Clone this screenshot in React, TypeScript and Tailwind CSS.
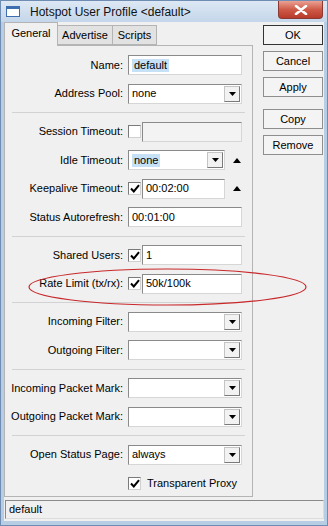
import type { ReactNode } from 'react'

const font = "font-['Liberation_Sans',Arial,sans-serif]"

function Down() {
  return (
    <svg width="7" height="4" viewBox="0 0 7 4">
      <polygon points="0,0 7,0 3.5,4" fill="#000" />
    </svg>
  )
}

function Up() {
  return (
    <div className="w-[23px] flex justify-center">
      <svg width="8" height="5" viewBox="0 0 8 5">
        <polygon points="0,5 8,5 4,0" fill="#000" />
      </svg>
    </div>
  )
}

function Box({ children, className = '' }: { children?: ReactNode; className?: string }) {
  return (
    <div
      className={`h-[20px] border border-t-[#8a8a8a] border-l-[#8a8a8a] border-r-[#d6d6d6] border-b-[#d6d6d6] flex items-center pl-[3px] ${className}`}
    >
      {children}
    </div>
  )
}

function Select({ value, w = 'w-[114px]', hl }: { value?: string; w?: string; hl?: boolean }) {
  return (
    <Box className={`${w} bg-white pr-[1px]`}>
      {value && <span className={hl ? 'bg-[#c6e1f6] px-[2px] leading-[13px]' : ''}>{value}</span>}
      <div className="ml-auto h-[16px] w-[16px] bg-[#f2f2f2] border border-[#c4c4c4] border-r-[#7a7a7a] border-b-[#7a7a7a] flex items-center justify-center">
        <Down />
      </div>
    </Box>
  )
}

function Check({ on }: { on?: boolean }) {
  return (
    <div className="w-[13px] h-[13px] mr-[1px] bg-white border border-t-[#7a7a7a] border-l-[#7a7a7a] border-r-[#d0d0d0] border-b-[#d0d0d0] flex items-center justify-center shrink-0">
      {on && (
        <svg width="10" height="9" viewBox="0 0 10 9">
          <path d="M1 4.5 L3.8 7.5 L9 1.2" stroke="#000" strokeWidth="2" fill="none" />
        </svg>
      )}
    </div>
  )
}

function Row({ label, children }: { label: string; children: ReactNode }) {
  return (
    <div className="grid grid-cols-[118px_120px] gap-x-[5px] items-center h-[20px]">
      <span className="text-right">{label}</span>
      <div className="flex items-center">{children}</div>
    </div>
  )
}

function Sep() {
  return <div className="ml-[7px] w-[233px] h-px bg-[#d2d2d2]" />
}

function Btn({ children, main }: { children: ReactNode; main?: boolean }) {
  return (
    <div
      className={`h-[20px] w-[60px] flex items-center justify-center bg-[#f4f4f4] border ${main ? 'border-[#333]' : 'border-[#8e8e8e]'}`}
    >
      {children}
    </div>
  )
}

export default function App() {
  return (
    <div className={`relative w-[328px] h-[526px] bg-[#b7cde4] border border-[#6f8db2] text-[11px] text-black ${font}`}>
      <div className="h-[21px] flex items-center bg-gradient-to-b from-[#dde8f4] to-[#c4d6ea]">
        <div className="ml-[5px] w-[14px] h-[11px] border border-[#3d6fb0] border-t-[3px] bg-white" />
        <span className="ml-[10px] text-[12px] text-[#111]">Hotspot User Profile &lt;default&gt;</span>
        <div className="ml-auto mr-[4px] self-start w-[45px] h-[18px] rounded-b-[4px] border border-t-0 border-[#8a3a32] bg-gradient-to-b from-[#e9a194] via-[#cf5a48] to-[#b8392a] flex items-center justify-center">
          <svg width="14" height="10" viewBox="0 0 14 10">
            <path d="M2 1 L12 9 M12 1 L2 9" stroke="#fff" strokeWidth="2.6" strokeLinecap="round" />
          </svg>
        </div>
      </div>

      <div className="mx-[3px] h-[499px] bg-[#f0f0f0] flex flex-col">
        <div className="flex">
          <div className="w-[249px]">
            <div className="flex items-end h-[23px]">
              <div className="relative z-10 -mb-px h-[24px] w-[54px] bg-[#f0f0f0] border border-b-0 border-[#b4b4b4] flex items-center justify-center pb-[2px]">
                General
              </div>
              <div className="h-[20px] w-[55px] bg-[#e2e2e2] border border-l-0 border-[#b4b4b4] flex items-center justify-center">
                Advertise
              </div>
              <div className="h-[20px] w-[44px] bg-[#e2e2e2] border border-l-0 border-[#b4b4b4] flex items-center justify-center">
                Scripts
              </div>
            </div>
            <div className="h-[452px] border border-[#b4b4b4] pt-[9px] flex flex-col gap-[8.5px]">
              <Row label="Name:">
                <Box className="w-[114px] bg-white">
                  <span className="bg-[#c6e1f6] px-[2px] leading-[13px]">default</span>
                </Box>
              </Row>
              <Row label="Address Pool:">
                <Select value="none" />
              </Row>
              <Sep />
              <Row label="Session Timeout:">
                <Check />
                <Box className="w-[100px] bg-[#f3f3f3]" />
              </Row>
              <Row label="Idle Timeout:">
                <Select value="none" w="w-[97px]" hl />
                <Up />
              </Row>
              <Row label="Keepalive Timeout:">
                <Check on />
                <Box className="w-[83px] bg-white">00:02:00</Box>
                <Up />
              </Row>
              <Row label="Status Autorefresh:">
                <Box className="w-[114px] bg-white">00:01:00</Box>
              </Row>
              <Sep />
              <Row label="Shared Users:">
                <Check on />
                <Box className="w-[100px] bg-white">1</Box>
              </Row>
              <Row label="Rate Limit (tx/rx):">
                <Check on />
                <Box className="w-[100px] bg-white">50k/100k</Box>
              </Row>
              <Sep />
              <Row label="Incoming Filter:">
                <Select />
              </Row>
              <Row label="Outgoing Filter:">
                <Select />
              </Row>
              <Sep />
              <Row label="Incoming Packet Mark:">
                <Select />
              </Row>
              <Row label="Outgoing Packet Mark:">
                <Select />
              </Row>
              <Sep />
              <Row label="Open Status Page:">
                <Select value="always" />
              </Row>
              <Row label="">
                <Check on />
                <span className="ml-[5px]">Transparent Proxy</span>
              </Row>
            </div>
          </div>

          <div className="ml-[10px] pt-[3px] flex flex-col gap-[6px]">
            <Btn main>OK</Btn>
            <Btn>Cancel</Btn>
            <Btn>Apply</Btn>
            <div className="mt-[6px]">
              <Btn>Copy</Btn>
            </div>
            <Btn>Remove</Btn>
          </div>
        </div>

        <div className="mt-[3px] ml-[1px] h-[19px] border border-t-[#8a8a8a] border-l-[#8a8a8a] border-r-[#dcdcdc] border-b-[#dcdcdc] flex items-center pl-[3px]">
          default
        </div>
      </div>

      <svg className="absolute left-0 top-0 pointer-events-none" width="328" height="526">
        <ellipse cx="166.5" cy="286" rx="138.5" ry="18" fill="none" stroke="#c8282a" strokeWidth="1.2" />
      </svg>
    </div>
  )
}
